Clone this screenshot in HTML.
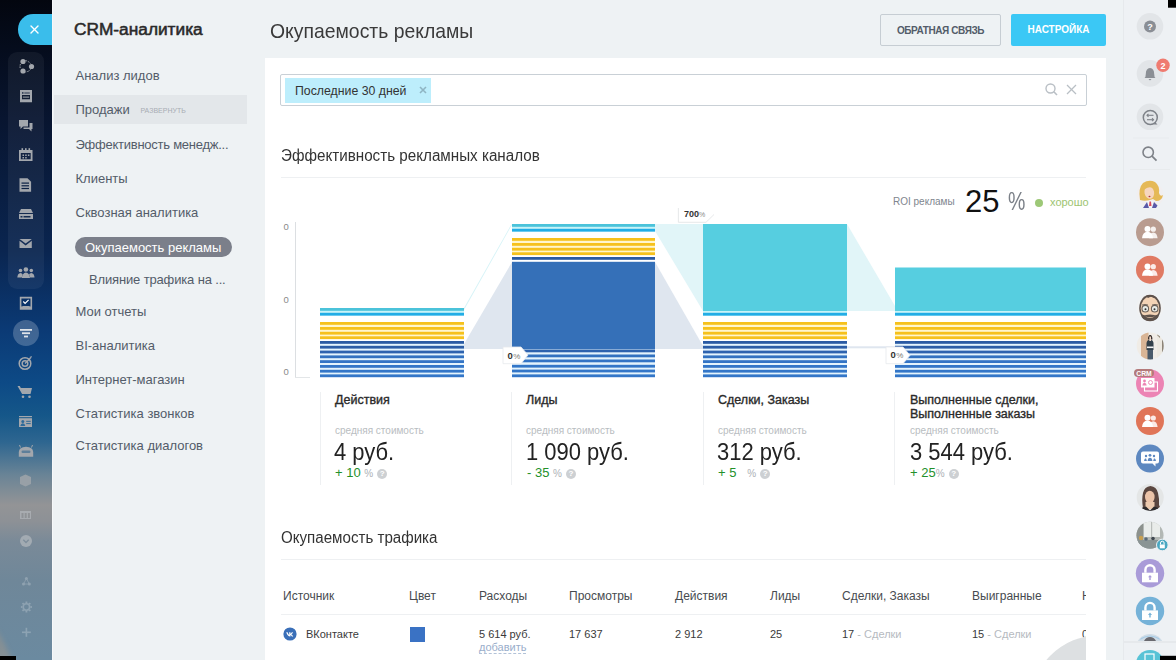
<!DOCTYPE html>
<html><head><meta charset="utf-8">
<style>
*{margin:0;padding:0;box-sizing:border-box}
html,body{width:1176px;height:660px;overflow:hidden}
body{background:#eef2f4;font-family:"Liberation Sans",sans-serif;position:relative;color:#333}
.abs{position:absolute}
#lsb{left:0;top:0;width:52px;height:660px;background:linear-gradient(180deg,#03060f 0%,#081530 18%,#0a2550 38%,#0b3a75 50%,#0d4a86 58%,#155789 63%,#2e6690 67%,#6a8496 72%,#939496 76.5%,#8d9196 79%,#7a8a98 82%,#6f8799 88%,#6b8aa0 100%)}
#lsb .grp{left:8px;top:52px;width:36px;height:237px;border-radius:9px;background:rgba(255,255,255,0.05)}
#lsb .pill{left:18px;top:14px;width:34px;height:30.5px;border-radius:15.25px 0 0 15.25px;background:#3abdeb}
#lsb .act{left:13px;top:320px;width:26px;height:26px;border-radius:50%;background:rgba(255,255,255,0.22)}
#menu{left:52px;top:0;width:213px;height:660px;background:#eef2f4;border-left:1px solid #f6f8f9}
.mi{position:absolute;left:75.5px;font-size:13px;color:#535c69;white-space:nowrap}
.main-title{left:270px;top:18.5px;font-size:21px;color:#3a3a3a;transform:scaleX(0.923);transform-origin:0 0;white-space:nowrap}
.btn{position:absolute;top:14px;height:32px;font-size:10px;font-weight:bold;text-align:center;line-height:32px;border-radius:2px}
#card{left:265px;top:58px;width:841px;height:602px;background:#fff}
#rsb{left:1123px;top:0;width:53px;height:660px;background:#eef1f4;border-left:1px solid #e6e9ec}
.vl{top:392px;width:1px;height:93px;background:#eef0f2}
.st b{font-weight:normal;-webkit-text-stroke:0.35px #2a2a2a}
.st{position:absolute;top:394px;font-size:12.5px;color:#2a2a2a;line-height:13.6px;white-space:nowrap}
.sub{position:absolute;top:425px;font-size:10px;color:#b9bdc1;white-space:nowrap}
.big{position:absolute;top:438.5px;font-size:23px;transform:scaleX(0.955);transform-origin:0 0;color:#222;white-space:nowrap}
.pct{position:absolute;top:465px;font-size:13px;color:#23902a;white-space:nowrap}
.pct i{font-style:normal;font-size:10px;color:#adb1b5;margin-left:0px}
.pct q{display:inline-block;width:10px;height:10px;border-radius:50%;background:#cdd0d3;color:#fff;font-size:8px;font-weight:bold;text-align:center;line-height:10px;margin-left:4px;vertical-align:1px}
.pct q:before,.pct q:after{content:""}
.th{position:absolute;top:588.5px;font-size:12px;color:#474b50;white-space:nowrap}
.td{position:absolute;top:628px;font-size:11px;color:#3a3a3a;white-space:nowrap}
</style></head><body>
<div id="lsb" class="abs">
  <div class="abs pill"></div>
  <div class="abs grp"></div>
  <div class="abs act"></div>
<svg class="abs" style="left:0;top:0" width="52" height="660">
<g fill="none" stroke="#fff" stroke-width="1.4" stroke-linecap="round"><line x1="31" y1="26" x2="38" y2="33"/><line x1="38" y1="26" x2="31" y2="33"/></g>
<g fill="#a3a7ad">
<!-- feed -->
<circle cx="23" cy="61.5" r="2.6"/><circle cx="31.5" cy="66.5" r="2.6"/><circle cx="23" cy="71" r="2.6"/>
<path d="M25.5 60.5 Q29 61.5 30.5 63.5" stroke="#a3a7ad" stroke-width="1" fill="none" stroke-dasharray="1.5 1"/>
<path d="M30.5 69.5 Q29 71.5 25.5 72" stroke="#a3a7ad" stroke-width="1" fill="none" stroke-dasharray="1.5 1"/>
<path d="M20.5 64 Q19.5 66.5 20.5 69" stroke="#a3a7ad" stroke-width="1" fill="none" stroke-dasharray="1.5 1"/>
<!-- window -->
<path d="M20 90 h12 v12.3 h-12z M22 95 v4.2 h8 v-4.2z" fill-rule="evenodd"/>
<rect x="22" y="92.3" width="1.5" height="1.3" fill="#0a1a35"/><rect x="24.3" y="92.6" width="5.5" height="0.8" fill="#0a1a35"/>
<rect x="22.8" y="96.6" width="6.4" height="1" fill="#a3a7ad"/>
<!-- chat -->
<path d="M19 120 h9 v6.5 h-5 l-2.5 2.5 v-2.5 h-1.5z"/>
<path d="M29.5 123 h3 v6 h-1 v2.5 l-2.5-2.5 h-5.5 v-1.5 h6z"/>
<!-- calendar -->
<path d="M19 150 h13.5 v11 h-13.5z M20.8 153 v6.3 h9.9 v-6.3z" fill-rule="evenodd"/>
<rect x="21.5" y="148.2" width="1.6" height="2.5"/><rect x="25" y="148.2" width="1.6" height="2.5"/><rect x="28.5" y="148.2" width="1.6" height="2.5"/>
<rect x="22.5" y="154.5" width="1.5" height="1.5"/><rect x="25.2" y="154.5" width="1.5" height="1.5"/><rect x="27.9" y="154.5" width="1.5" height="1.5"/><rect x="22.5" y="157" width="1.5" height="1.5"/><rect x="25.2" y="157" width="1.5" height="1.5"/>
<!-- document -->
<path d="M19.5 178.2 h8 l3.6 3.6 v10 h-11.6z"/>
<rect x="21.5" y="182.5" width="7.5" height="1.2" fill="#0b2044"/><rect x="21.5" y="185.2" width="7.5" height="1.2" fill="#0b2044"/><rect x="21.5" y="187.9" width="7.5" height="1.2" fill="#0b2044"/>
<!-- drive -->
<path d="M21 209 h10 l2 4 h-14z"/>
<path d="M19 214 h14 v5 h-14z M20.5 216 v1.5 h2 v-1.5z M23.5 216 v1.5 h7 v-1.5z" fill-rule="evenodd"/>
<!-- mail -->
<path d="M19.5 239 h12.3 l-6.15 4.6z"/>
<path d="M19.5 240.8 l6.15 4.6 l6.15-4.6 v7.3 h-12.3z"/>
<!-- people -->
<circle cx="25.9" cy="269.5" r="2.3"/><path d="M21.8 278 q0.5-5 4.1-5.5 q3.6 0.5 4.1 5.5z"/>
<circle cx="20.5" cy="270.5" r="1.8"/><path d="M17.3 277.5 q0.3-4 3.2-4.4 q1.5 0.2 2.2 1.2 l-1 3.2z"/>
<circle cx="31.3" cy="270.5" r="1.8"/><path d="M34.5 277.5 q-0.3-4 -3.2-4.4 q-1.5 0.2 -2.2 1.2 l1 3.2z"/>
<!-- task -->
<path d="M19.8 296.8 h12.3 v13 h-12.3z M21.4 298.4 v8 h9.1 v-8z" fill-rule="evenodd"/>
<rect x="22.5" y="306" width="7" height="2" />
<path d="M23.3 301.5 l1.8 1.8 l3.5-3.5" stroke="#fff" stroke-width="1.2" fill="none"/>
</g>
<!-- funnel -->
<g fill="#dfe3e8"><rect x="20" y="329" width="12" height="1.8"/><rect x="22" y="332.3" width="8" height="1.8"/><rect x="24" y="335.6" width="4" height="1.8"/></g>
<g fill="none" stroke="#a3a7ad" stroke-width="1.5">
<circle cx="25" cy="363.5" r="5.8"/><circle cx="25" cy="363.5" r="2.8"/><line x1="25" y1="363.5" x2="30.5" y2="358"/>
</g>
<path d="M29.5 357 l2.5-1 l-1 2.5z" fill="#a3a7ad"/>
<g fill="#a3a7ad">
<!-- cart -->
<path d="M17.5 386 h2.3 l1 2 h11.2 l-1.5 6 h-8.4z" />
<circle cx="23" cy="396.8" r="1.3"/><circle cx="29.5" cy="396.8" r="1.3"/>
<!-- id card -->
<rect x="19" y="416" width="13" height="1.2"/>
<path d="M19 418.2 h13 v8.8 h-13z" />
<circle cx="22.8" cy="421.5" r="1.5" fill="#2d6a9a"/><path d="M20.3 426 q0.5-2.6 2.5-2.8 q2 0.2 2.5 2.8z" fill="#2d6a9a"/>
<rect x="26.2" y="420.8" width="4.5" height="1.1" fill="#3a7099"/><rect x="26.2" y="423" width="4.5" height="1.1" fill="#3a7099"/>
<!-- robot -->
<path d="M18.8 452 q0.3-5 7.2-5.2 q6.9 0.2 7.2 5.2 v4.8 h-14.4z"/>
<rect x="21.5" y="450.5" width="9" height="2.5" rx="1.2" fill="#5e7f9a"/>
<line x1="20.5" y1="447.5" x2="19.5" y2="445" stroke="#a3a7ad" stroke-width="1"/><line x1="31.5" y1="447.5" x2="32.5" y2="445" stroke="#a3a7ad" stroke-width="1"/>
</g>
<g fill="#9ca3a9" opacity="0.9">
<!-- box -->
<path d="M20 477 l5.5-2.5 l5.5 2.5 v7 l-5.5 2.5 l-5.5-2.5z"/>
</g>
<g fill="#b2b6ba" opacity="0.7">
<!-- sites -->
<path d="M20 511 h11 v8 h-11z M21.5 513 v5 h2 v-5z M24.7 513 v5 h2 v-5z M27.9 513 v5 h2 v-5z" fill-rule="evenodd"/>
</g>
<circle cx="26" cy="541" r="6" fill="#a9b0b6" opacity="0.85"/>
<path d="M23.3 539.8 l2.7 2.7 l2.7-2.7" stroke="#7f8e9b" stroke-width="1.3" fill="none"/>
<g fill="#fff" opacity="0.22">
<circle cx="26.4" cy="578.5" r="1.5"/><circle cx="23.5" cy="584" r="1.5"/><circle cx="29.3" cy="584" r="1.5"/>
<path d="M26.4 578.5 L23.5 584 L29.3 584z" fill="none" stroke="#fff" stroke-width="0.8"/>
<g fill="none" stroke="#fff" stroke-width="1.6"><circle cx="26.4" cy="607" r="3.2"/></g><g stroke="#fff" stroke-width="1.8"><line x1="26.4" y1="601.5" x2="26.4" y2="603"/><line x1="26.4" y1="611" x2="26.4" y2="612.5"/><line x1="20.9" y1="607" x2="22.4" y2="607"/><line x1="30.4" y1="607" x2="31.9" y2="607"/><line x1="22.5" y1="603.1" x2="23.6" y2="604.2"/><line x1="29.2" y1="609.8" x2="30.3" y2="610.9"/><line x1="22.5" y1="610.9" x2="23.6" y2="609.8"/><line x1="29.2" y1="604.2" x2="30.3" y2="603.1"/></g>
<rect x="25.6" y="627.8" width="1.6" height="9"/><rect x="22" y="631.5" width="8.8" height="1.6"/>
</g>
<defs><filter id="bl1"><feGaussianBlur stdDeviation="2.5"/></filter></defs><path d="M-4 628 Q6 646 14 664 H-4z" fill="#a0968a" opacity="0.5" filter="url(#bl1)"/>
<rect x="0" y="656" width="16" height="4" fill="#000"/>
</svg>
</div>
<div id="menu" class="abs"></div>
<div class="abs" style="left:74px;top:19px;font-size:17.3px;color:#2a2a2a;-webkit-text-stroke:0.55px #2a2a2a">CRM-аналитика</div>
<div class="mi" style="top:68px">Анализ лидов</div>
<div class="abs" style="left:54px;top:95px;width:193px;height:29px;background:#e3e7ea"></div>
<div class="mi" style="top:102px">Продажи <span style="font-size:7px;color:#a8adb4;margin-left:7px;vertical-align:1px">РАЗВЕРНУТЬ</span></div>
<div class="mi" style="top:137px;letter-spacing:-0.25px">Эффективность менедж...</div>
<div class="mi" style="top:171px">Клиенты</div>
<div class="mi" style="top:205px">Сквозная аналитика</div>
<div class="abs" style="left:75px;top:237px;width:157px;height:20px;border-radius:10px;background:#7b7f8a"></div>
<div class="mi" style="top:240px;left:85px;color:#fff">Окупаемость рекламы</div>
<div class="mi" style="top:272px;left:89px;letter-spacing:-0.15px">Влияние трафика на ...</div>
<div class="mi" style="top:304px">Мои отчеты</div>
<div class="mi" style="top:338px">BI-аналитика</div>
<div class="mi" style="top:372px">Интернет-магазин</div>
<div class="mi" style="top:406px">Статистика звонков</div>
<div class="mi" style="top:438px">Статистика диалогов</div>

<div class="abs main-title">Окупаемость рекламы</div>
<div class="btn" style="left:880px;width:121px;border:1px solid #c6cdd3;color:#535c69;background:#eef2f4;letter-spacing:-0.4px">ОБРАТНАЯ СВЯЗЬ</div>
<div class="btn" style="left:1011px;width:95px;background:#3bc8f5;color:#fff">НАСТРОЙКА</div>

<div id="card" class="abs"></div>
<!-- filter -->
<div class="abs" style="left:280px;top:74px;width:807px;height:32px;border:1px solid #c9d0d6;border-radius:2px;background:#fff"></div>
<div class="abs" style="left:285px;top:78px;width:146px;height:25px;background:#bdeefc"></div>
<div class="abs" style="left:295px;top:84px;font-size:12.3px;color:#333;white-space:nowrap">Последние 30 дней</div>
<svg class="abs" style="left:419px;top:86px" width="8" height="8"><path d="M1 1 L7 7 M7 1 L1 7" stroke="#8fb5c3" stroke-width="1.6"/></svg>
<svg class="abs" style="left:1044px;top:82px" width="40" height="16" viewBox="0 0 40 16"><circle cx="6.5" cy="6.5" r="4.5" fill="none" stroke="#b9bfc5" stroke-width="1.4"/><line x1="9.8" y1="9.8" x2="13" y2="13" stroke="#b9bfc5" stroke-width="1.6"/><line x1="23" y1="3" x2="32" y2="12" stroke="#b9bfc5" stroke-width="1.3"/><line x1="32" y1="3" x2="23" y2="12" stroke="#b9bfc5" stroke-width="1.3"/></svg>
<!-- section title -->
<div class="abs" style="left:281px;top:147px;font-size:16px;color:#333;white-space:nowrap;transform:scaleX(0.95);transform-origin:0 0">Эффективность рекламных каналов</div>
<div class="abs" style="left:281px;top:177px;width:805px;height:1px;background:#eef0f2"></div>
<!-- ROI -->
<div class="abs" style="left:893px;top:196px;font-size:10px;color:#80868e;white-space:nowrap">ROI рекламы</div>
<div class="abs" style="left:965px;top:183.5px;font-size:31px;color:#111;white-space:nowrap">25</div>
<div class="abs" style="left:1008px;top:187px;font-size:25px;color:#7b8088;white-space:nowrap;transform:scaleX(0.78);transform-origin:0 0">%</div>
<div class="abs" style="left:1035px;top:198.5px;width:8px;height:8px;border-radius:50%;background:#9dc877"></div>
<div class="abs" style="left:1050px;top:196px;font-size:11px;color:#9dc471;white-space:nowrap">хорошо</div>
<!-- axis -->
<div class="abs" style="left:283.5px;top:220.5px;font-size:9.5px;color:#8a8a8a">0</div>
<div class="abs" style="left:283.5px;top:293.5px;font-size:9.5px;color:#8a8a8a">0</div>
<div class="abs" style="left:283.5px;top:365.5px;font-size:9.5px;color:#8a8a8a">0</div>
<div class="abs" style="left:295px;top:222px;width:1px;height:155px;background:#dcdfe2"></div>
<div class="abs" style="left:295px;top:377px;width:15px;height:1px;background:#e3e6e8"></div>
<svg class="abs" style="left:0;top:0" width="1176" height="660">
<polygon points="464,308 511.5,224 511.5,225.5 464,310" fill="#d6f3f7"/>
<polygon points="464,344 512,262 512,349 464,349" fill="#dfe6ef"/>
<polygon points="655,224 703,224 703,311 655,231" fill="#e1f5f8"/>
<polygon points="655,262 703,346 703,349 655,349" fill="#dfe6ef"/>
<polygon points="847,224 895,306 895,311 847,311" fill="#e1f5f8"/>
<rect x="847" y="346.3" width="48" height="2" fill="#dfe6ef"/>
<rect x="320" y="308" width="144" height="7.6" fill="#c8f3f8"/>
<rect x="320" y="308" width="144" height="2.8" fill="#4bc3da"/>
<rect x="320" y="312.8" width="144" height="2.8" fill="#22ade6"/>
<rect x="320" y="322" width="144" height="17.1" fill="#fff6cc"/>
<rect x="320" y="322" width="144" height="2.8" fill="#f6c11c"/>
<rect x="320" y="327" width="144" height="2.8" fill="#f6c11c"/>
<rect x="320" y="331.8" width="144" height="2.8" fill="#f6c11c"/>
<rect x="320" y="336.3" width="144" height="2.8" fill="#f6c11c"/>
<rect x="320" y="341" width="144" height="36.2" fill="#e4f4fd"/>
<rect x="320" y="341" width="144" height="2.8" fill="#2a5aa3"/>
<rect x="320" y="345.8" width="144" height="2.8" fill="#2b5ca6"/>
<rect x="320" y="350.6" width="144" height="2.8" fill="#2d62ae"/>
<rect x="320" y="355.4" width="144" height="2.8" fill="#3271c0"/>
<rect x="320" y="360.2" width="144" height="2.8" fill="#3374c5"/>
<rect x="320" y="365" width="144" height="2.8" fill="#3376c8"/>
<rect x="320" y="369.8" width="144" height="2.8" fill="#3376c8"/>
<rect x="320" y="374.4" width="144" height="2.8" fill="#3376c8"/>
<rect x="512" y="224" width="143" height="7.6" fill="#c8f3f8"/>
<rect x="512" y="224" width="143" height="2.8" fill="#4bc3da"/>
<rect x="512" y="228.8" width="143" height="2.8" fill="#22ade6"/>
<rect x="512" y="238" width="143" height="17.1" fill="#fff6cc"/>
<rect x="512" y="238" width="143" height="2.8" fill="#f6c11c"/>
<rect x="512" y="243" width="143" height="2.8" fill="#f6c11c"/>
<rect x="512" y="247.8" width="143" height="2.8" fill="#f6c11c"/>
<rect x="512" y="252.3" width="143" height="2.8" fill="#f6c11c"/>
<rect x="512" y="257" width="143" height="2.8" fill="#2a5aa3"/>
<rect x="512" y="261.8" width="143" height="87.2" fill="#3570b8"/>
<rect x="512" y="349" width="143" height="28.2" fill="#e4f4fd"/>
<rect x="512" y="349.5" width="143" height="2.8" fill="#2d62ae"/>
<rect x="512" y="354.5" width="143" height="2.8" fill="#3271c0"/>
<rect x="512" y="359.5" width="143" height="2.8" fill="#3374c5"/>
<rect x="512" y="364.8" width="143" height="2.8" fill="#3376c8"/>
<rect x="512" y="369.6" width="143" height="2.8" fill="#3376c8"/>
<rect x="512" y="374.4" width="143" height="2.8" fill="#3376c8"/>
<rect x="703" y="224" width="144" height="87" fill="#56cee0"/>
<rect x="703" y="311" width="144" height="5" fill="#c8f3f8"/>
<rect x="703" y="312.8" width="144" height="2.8" fill="#22ade6"/>
<rect x="703" y="322" width="144" height="17.1" fill="#fff6cc"/>
<rect x="703" y="322" width="144" height="2.8" fill="#f6c11c"/>
<rect x="703" y="327" width="144" height="2.8" fill="#f6c11c"/>
<rect x="703" y="331.8" width="144" height="2.8" fill="#f6c11c"/>
<rect x="703" y="336.3" width="144" height="2.8" fill="#f6c11c"/>
<rect x="703" y="341" width="144" height="36.2" fill="#e4f4fd"/>
<rect x="703" y="341" width="144" height="2.8" fill="#2a5aa3"/>
<rect x="703" y="345.8" width="144" height="2.8" fill="#2b5ca6"/>
<rect x="703" y="350.6" width="144" height="2.8" fill="#2d62ae"/>
<rect x="703" y="355.4" width="144" height="2.8" fill="#3271c0"/>
<rect x="703" y="360.2" width="144" height="2.8" fill="#3374c5"/>
<rect x="703" y="365" width="144" height="2.8" fill="#3376c8"/>
<rect x="703" y="369.8" width="144" height="2.8" fill="#3376c8"/>
<rect x="703" y="374.4" width="144" height="2.8" fill="#3376c8"/>
<rect x="895" y="267.5" width="191" height="43.5" fill="#56cee0"/>
<rect x="895" y="311" width="191" height="5" fill="#c8f3f8"/>
<rect x="895" y="312.8" width="191" height="2.8" fill="#22ade6"/>
<rect x="895" y="322" width="191" height="17.1" fill="#fff6cc"/>
<rect x="895" y="322" width="191" height="2.8" fill="#f6c11c"/>
<rect x="895" y="327" width="191" height="2.8" fill="#f6c11c"/>
<rect x="895" y="331.8" width="191" height="2.8" fill="#f6c11c"/>
<rect x="895" y="336.3" width="191" height="2.8" fill="#f6c11c"/>
<rect x="895" y="341" width="191" height="36.2" fill="#e4f4fd"/>
<rect x="895" y="341" width="191" height="2.8" fill="#2a5aa3"/>
<rect x="895" y="345.8" width="191" height="2.8" fill="#2b5ca6"/>
<rect x="895" y="350.6" width="191" height="2.8" fill="#2d62ae"/>
<rect x="895" y="355.4" width="191" height="2.8" fill="#3271c0"/>
<rect x="895" y="360.2" width="191" height="2.8" fill="#3374c5"/>
<rect x="895" y="365" width="191" height="2.8" fill="#3376c8"/>
<rect x="895" y="369.8" width="191" height="2.8" fill="#3376c8"/>
<rect x="895" y="374.4" width="191" height="2.8" fill="#3376c8"/>
</svg>
<!-- tags -->
<svg class="abs" style="left:500px;top:345px" width="30" height="21" viewBox="0 0 30 21"><path d="M3 2 H21 L28 10 L21 18.7 H3 Z" fill="#fff" stroke="#e6e9ec" stroke-width="0.8"/></svg>
<div class="abs" style="left:507.5px;top:349.5px;font-size:9.5px;color:#333;font-weight:bold;white-space:nowrap">0<span style="font-size:8px;color:#777;font-weight:normal;margin-left:0.5px">%</span></div>
<svg class="abs" style="left:882.5px;top:345px" width="30" height="21" viewBox="0 0 30 21"><path d="M3 2 H20 L27 10.3 L20 18.7 H3 Z" fill="#fff" stroke="#e6e9ec" stroke-width="0.8"/></svg>
<div class="abs" style="left:890.5px;top:349px;font-size:9.5px;color:#333;font-weight:bold;white-space:nowrap">0<span style="font-size:8px;color:#777;font-weight:normal;margin-left:0.5px">%</span></div>
<svg class="abs" style="left:676px;top:205px" width="40" height="20" viewBox="0 0 40 20"><path d="M2.4 3 H38 V9.5 L30 17.3 H2.4 Z" fill="#fff"/><path d="M2.4 3 V17.3 H30 L38 9.5" fill="none" stroke="#dfe2e5" stroke-width="0.8"/></svg>
<div class="abs" style="left:684px;top:209px;font-size:9px;color:#333;font-weight:bold;white-space:nowrap">700<span style="font-size:7px;color:#888;font-weight:normal">%</span></div>
<!-- stats -->
<div class="abs vl" style="left:320px"></div>
<div class="abs vl" style="left:511px"></div>
<div class="abs vl" style="left:703px"></div>
<div class="abs vl" style="left:894px"></div>
<div class="st" style="left:335px"><b>Действия</b></div>
<div class="st" style="left:526px"><b>Лиды</b></div>
<div class="st" style="left:718px"><b>Сделки, Заказы</b></div>
<div class="st" style="left:910px"><b>Выполненные сделки,<br>Выполненные заказы</b></div>
<div class="sub" style="left:335px">средняя стоимость</div>
<div class="sub" style="left:526px">средняя стоимость</div>
<div class="sub" style="left:718px">средняя стоимость</div>
<div class="sub" style="left:910px">средняя стоимость</div>
<div class="big" style="left:334px">4 руб.</div>
<div class="big" style="left:526px">1 090 руб.</div>
<div class="big" style="left:717px">312 руб.</div>
<div class="big" style="left:910px">3 544 руб.</div>
<div class="pct" style="left:335px">+ 10 <i>%</i><q>?</q></div>
<div class="pct" style="left:527px">- 35 <i>%</i><q>?</q></div>
<div class="pct" style="left:718px">+ 5 &nbsp;&nbsp;<i>%</i><q>?</q></div>
<div class="pct" style="left:910px">+ 25<i>%</i><q>?</q></div>
<!-- table -->
<div class="abs" style="left:281px;top:529px;font-size:16px;color:#333;white-space:nowrap;transform:scaleX(0.945);transform-origin:0 0">Окупаемость трафика</div>
<div class="abs" style="left:281px;top:559px;width:805px;height:1px;background:#eef0f2"></div>
<div class="th" style="left:283px">Источник</div>
<div class="th" style="left:409px">Цвет</div>
<div class="th" style="left:479px">Расходы</div>
<div class="th" style="left:569px">Просмотры</div>
<div class="th" style="left:675px">Действия</div>
<div class="th" style="left:770px">Лиды</div>
<div class="th" style="left:842px">Сделки, Заказы</div>
<div class="th" style="left:972px">Выигранные</div>
<div class="th" style="left:1082px;width:4px;overflow:hidden">Н</div>
<div class="abs" style="left:281px;top:614px;width:805px;height:1px;background:#eef0f2"></div>
<svg class="abs" style="left:283px;top:626.5px" width="14" height="14" viewBox="0 0 14 14"><circle cx="7" cy="7" r="6.6" fill="#3a6fb8"/><path d="M3.3 5.3 h1.3 q0.7 2 1.6 2.6 v-2.6 h1.2 v1.5 q0.9-0.3 1.4-1.5 h1.2 q-0.4 1.4-1.6 2.1 q1.2 0.6 1.8 2.1 h-1.3 q-0.6-1.2-1.5-1.4 v1.4 h-0.2 q-2.6 0-3.9-4.1z" fill="#fff"/></svg>
<div class="td" style="left:306px">ВКонтакте</div>
<div class="abs" style="left:410px;top:627px;width:15px;height:15px;background:#3a72c4"></div>
<div class="td" style="left:479px">5 614 руб.</div>
<div class="abs" style="left:479px;top:641.5px;font-size:11px;color:#9aaecb;border-bottom:1px dashed #b3c3d8;line-height:11px;padding-bottom:0.5px;white-space:nowrap">добавить</div>
<div class="td" style="left:569px">17 637</div>
<div class="td" style="left:675px">2 912</div>
<div class="td" style="left:770px">25</div>
<div class="td" style="left:842px">17 <span style="color:#b6babf">- Сделки</span></div>
<div class="td" style="left:972px">15 <span style="color:#b6babf">- Сделки</span></div>
<div class="td" style="left:1082px;width:4px;overflow:hidden">0</div>
<div class="abs" style="left:1030px;top:635px;width:56px;height:25px;overflow:hidden"><div style="position:absolute;left:0;top:0;width:140px;height:140px;border-radius:50%;background:#dde0e2"></div></div>


<div id="rsb" class="abs"></div>
<svg class="abs" style="left:1124px;top:0" width="52" height="660" viewBox="1124 0 52 660">
<rect x="1168" y="0" width="8" height="7.7" fill="#000"/>
<circle cx="1150" cy="26.3" r="13.3" fill="#e2e5e8"/>
<circle cx="1150" cy="26.5" r="6" fill="#8a8e95"/>
<text x="1150" y="29.8" font-size="9" font-weight="bold" fill="#fff" text-anchor="middle" font-family="Liberation Sans">?</text>
<circle cx="1150" cy="73.4" r="13.3" fill="#e2e5e8"/>
<path d="M1144.5 78 q1.3-1 1.3-4 q0-5.5 4.2-6 q4.2 0.5 4.2 6 q0 3 1.3 4z" fill="#8b8f95"/>
<path d="M1148.5 79 h3 l-1.5 1.5z" fill="#8b8f95"/>
<circle cx="1163" cy="65.2" r="6.7" fill="#ef7b70"/>
<text x="1163" y="68.5" font-size="9" font-weight="bold" fill="#fff" text-anchor="middle" font-family="Liberation Sans">2</text>
<circle cx="1150" cy="116.8" r="13.3" fill="#e2e5e8"/>
<circle cx="1150.3" cy="117.5" r="7" fill="none" stroke="#7e8288" stroke-width="1.5"/>
<path d="M1155 122 l2.5 2.5 l-3.5 0z" fill="#7e8288"/>
<g stroke="#7e8288" stroke-width="1.1" fill="none"><line x1="1147" y1="115.3" x2="1153.5" y2="115.3"/><line x1="1147" y1="119.7" x2="1153.5" y2="119.7"/><path d="M1148.5 113.8 l-1.5 1.5 l1.5 1.5"/><path d="M1152 118.2 l1.5 1.5 l-1.5 1.5"/></g>
<rect x="1133" y="137.5" width="36" height="1" fill="#e8ebed"/>
<circle cx="1148.2" cy="152.3" r="5.2" fill="none" stroke="#7e8288" stroke-width="1.6"/>
<line x1="1152" y1="156.2" x2="1156.5" y2="160.7" stroke="#7e8288" stroke-width="1.8"/>
<rect x="1130" y="169" width="40" height="1" fill="#e8ebed"/>
<!-- avatar cartoon -->
<circle cx="1150" cy="195" r="13.5" fill="#f1eff0"/>
<path d="M1140 200 Q1138 188 1143 183 Q1149 179 1155 182 Q1160 186 1159 193 Q1160 197 1163 195 Q1162 201 1156 201 L1153 199 Q1146 202 1140 200z" fill="#e5b957"/>
<ellipse cx="1149.3" cy="192.5" rx="4.8" ry="6.3" transform="rotate(-12 1149.3 192.5)" fill="#f6d6bf"/>
<path d="M1145 186 Q1148 183 1153 185 L1153 188 Q1149 186 1145 189z" fill="#e5b957"/>
<ellipse cx="1149.5" cy="196.5" rx="1" ry="0.8" fill="#b0303a"/>
<path d="M1143 208 L1147 201 L1153 201 L1157 205 L1156 208z" fill="#f4f4f6"/>
<path d="M1143 208 L1147 202 L1149 208z M1152 208 L1154 202 L1157.5 205.5 L1156 208z" fill="#5a5aa8"/>
<path d="M1149.5 201.5 L1151 201.5 L1151.5 206 L1149 206z" fill="#d84a5a"/>
<circle cx="1150" cy="232.2" r="14" fill="#b99c90"/>
<g fill="#fff"><circle cx="1153.3" cy="229.2" r="2.6" opacity="0.85"/><path d="M1149 238.2 q0.5-5.5 4.3-5.8 q3.8 0.3 4.3 5.8z" opacity="0.85"/>
<circle cx="1147.5" cy="228.89999999999998" r="3"/><path d="M1142 238.2 q0.6-6.2 5.5-6.5 q4.9 0.3 5.5 6.5z"/></g>
<circle cx="1150" cy="269.7" r="14" fill="#e07a63"/>
<g fill="#fff"><circle cx="1153.3" cy="266.7" r="2.6" opacity="0.85"/><path d="M1149 275.7 q0.5-5.5 4.3-5.8 q3.8 0.3 4.3 5.8z" opacity="0.85"/>
<circle cx="1147.5" cy="266.4" r="3"/><path d="M1142 275.7 q0.6-6.2 5.5-6.5 q4.9 0.3 5.5 6.5z"/></g>
<!-- man -->
<circle cx="1150" cy="307.5" r="13.5" fill="#f1f2f3"/>
<ellipse cx="1150" cy="308" rx="10.8" ry="13.2" fill="#5e524c"/>
<ellipse cx="1150" cy="308.5" rx="9.3" ry="11.8" fill="#f3d3b6"/>
<path d="M1142 300 Q1143 296 1146 296 L1148 298 L1151 296.5 L1154 298 Q1157 297 1158 300 Q1156 295 1150 295 Q1144 295 1142 300z" fill="#5e524c"/>
<path d="M1141 313 Q1143 316 1146 315 Q1150 314 1154 315 Q1157 316 1159 313 Q1159 321 1150 321 Q1141 321 1141 313z" fill="#5e524c"/>
<path d="M1145 316.5 Q1150 319 1155 316.5 Q1150 317.5 1145 316.5z" fill="#f3d3b6"/>
<g fill="#e9ece8" stroke="#6d625a" stroke-width="1.1"><circle cx="1145.3" cy="308.7" r="3.3"/><circle cx="1154.7" cy="308.7" r="3.3"/></g>
<circle cx="1145.5" cy="309.2" r="1" fill="#333"/><circle cx="1154.5" cy="309.2" r="1" fill="#333"/>
<path d="M1142 305 Q1145 303.8 1148 305 M1152 305 Q1155 303.8 1158 305" stroke="#6d625a" stroke-width="0.9" fill="none"/>
<!-- photo woman -->
<clipPath id="cpw1"><circle cx="1150.2" cy="345.9" r="13.5"/></clipPath>
<g clip-path="url(#cpw1)">
<rect x="1136" y="332" width="29" height="29" fill="#f0ece6"/>
<rect x="1141" y="332" width="7.5" height="29" fill="#d9b596"/>
<rect x="1157" y="332" width="5" height="29" fill="#ece8e0"/>
<path d="M1157 335 l3 3 v-6z" fill="#8a8070"/>
<rect x="1162" y="332" width="3" height="29" fill="#8c8478"/>
<path d="M1146.5 350 v-6.5 q0-3.5 3.5-4 q3.5 0.5 3.5 4 v6.5z" fill="#33404a"/>
<rect x="1147.5" y="350" width="5.5" height="11" fill="#4a5a6a"/>
<rect x="1147" y="346.5" width="6.5" height="1.6" fill="#f3f3f3"/>
<path d="M1148 339.5 q0-4.5 2.2-4.5 q2.2 0 2.2 4.5z" fill="#2a2220"/>
<rect x="1149.3" y="336.5" width="1.8" height="4.5" fill="#f0d8c8"/>
</g>
<!-- crm pink -->
<circle cx="1150" cy="383.6" r="14" fill="#ec84b4"/>
<rect x="1144.5" y="382" width="13" height="9" fill="none" stroke="#fff" stroke-width="1.1"/>
<rect x="1141" y="378" width="13.5" height="9.5" fill="#fff"/>
<circle cx="1144.5" cy="381" r="1.4" fill="#ec84b4"/><path d="M1142.3 385.5 q0.3-2.6 2.2-2.7 q1.9 0.1 2.2 2.7z" fill="#ec84b4"/>
<circle cx="1150.5" cy="382.5" r="2" fill="none" stroke="#ec84b4" stroke-width="0.9"/>
<rect x="1134" y="369" width="20" height="8" rx="4" fill="#b47a7b"/>
<text x="1144" y="375.5" font-size="6.8" font-weight="bold" fill="#fff" text-anchor="middle" font-family="Liberation Sans">CRM</text>
<circle cx="1150" cy="421" r="14" fill="#e07558"/>
<g fill="#fff"><circle cx="1153.3" cy="418" r="2.6" opacity="0.85"/><path d="M1149 427 q0.5-5.5 4.3-5.8 q3.8 0.3 4.3 5.8z" opacity="0.85"/>
<circle cx="1147.5" cy="417.7" r="3"/><path d="M1142 427 q0.6-6.2 5.5-6.5 q4.9 0.3 5.5 6.5z"/></g>
<!-- blue chat -->
<circle cx="1150" cy="458.6" r="14" fill="#5d88c0"/>
<path d="M1143 451.5 h14 a2 2 0 0 1 2 2 v8 a2 2 0 0 1 -2 2 h-1.5 v3 l-3-3 h-9.5 a2 2 0 0 1 -2-2 v-8 a2 2 0 0 1 2-2z" fill="#fff"/>
<g fill="#5d88c0"><circle cx="1150" cy="455.3" r="1.4"/><path d="M1147.6 461 q0.3-3.2 2.4-3.3 q2.1 0.1 2.4 3.3z"/><circle cx="1146" cy="456" r="1.2"/><path d="M1144 461 q0.2-2.7 2-2.8 l0.9 2.8z"/><circle cx="1154" cy="456" r="1.2"/><path d="M1156 461 q-0.2-2.7 -2-2.8 l-0.9 2.8z"/></g>
<!-- woman photo 2 -->
<clipPath id="cpw2"><circle cx="1150.2" cy="497.4" r="13.5"/></clipPath>
<g clip-path="url(#cpw2)">
<rect x="1136" y="483" width="29" height="29" fill="#e4e6e6"/>
<path d="M1143 508 q-1.5-9 0-15 q1.5-6.5 7.5-7 q6 0.5 7.5 7 q1.5 6 1 12 l2 4z" fill="#5a4640"/>
<ellipse cx="1149.8" cy="497" rx="4.8" ry="6.2" fill="#ebc3a8"/>
<path d="M1144.5 491.5 q5-4 10 0 q-2-2.5-5-2.5 q-3 0-5 2.5z" fill="#5a4640"/>
<path d="M1145.5 502 h9 v7 h-9z" fill="#eccaaf"/>
<path d="M1139 512 q2-5 7-5.5 l4 4 l4-4 q5 0.5 7 5.5z" fill="#2c2a2c"/>
</g>
<!-- office photo -->
<clipPath id="cpof"><circle cx="1150" cy="535.3" r="13.5"/></clipPath>
<g clip-path="url(#cpof)">
<rect x="1136" y="521" width="28" height="29" fill="#b3b8b5"/>
<rect x="1136" y="521" width="7" height="29" fill="#8c918d"/>
<rect x="1144" y="521" width="16" height="16" fill="#e9ecea"/>
<rect x="1151" y="521" width="1.2" height="16" fill="#b9bdbb"/>
<rect x="1136" y="540" width="28" height="10" fill="#8a9494"/>
<circle cx="1141" cy="538" r="2.2" fill="#c9a050"/><circle cx="1146" cy="539" r="1.8" fill="#5a6a7a"/><circle cx="1153" cy="538.5" r="1.8" fill="#404850"/>
</g>
<circle cx="1162.3" cy="545" r="5.8" fill="#4aa8c2" stroke="#eef1f4" stroke-width="1"/>
<path d="M1160.5 544.5 v-1.5 a1.8 1.8 0 0 1 3.6 0 v1.5" fill="none" stroke="#fff" stroke-width="1"/>
<rect x="1159.8" y="544.5" width="5" height="3.8" fill="#fff"/>
<circle cx="1150" cy="573.3" r="14.2" fill="#a99bd8"/>
<path d="M1145.4 572.8 v-3 a4.6 4.6 0 0 1 9.2 0 v3" fill="none" stroke="#fff" stroke-width="2.4"/>
<rect x="1142" y="572.6999999999999" width="16" height="9.6" fill="#fff"/>
<path d="M1150 574.9 l-2 2.4 h1.3 v2.6 h1.4 v-2.6 h1.3z" fill="#a99bd8"/>
<circle cx="1150" cy="611" r="14.2" fill="#75b2d8"/>
<path d="M1145.4 610.5 v-3 a4.6 4.6 0 0 1 9.2 0 v3" fill="none" stroke="#fff" stroke-width="2.4"/>
<rect x="1142" y="610.4" width="16" height="9.6" fill="#fff"/>
<path d="M1150 612.6 l-2 2.4 h1.3 v2.6 h1.4 v-2.6 h1.3z" fill="#75b2d8"/>
<clipPath id="cp1"><rect x="1124" y="620" width="52" height="21"/></clipPath>
<g clip-path="url(#cp1)"><circle cx="1150" cy="648" r="14" fill="#d0dce6"/><path d="M1144 641 q2-4 6-4 q4 0 6 4z" fill="#6a6a70"/><path d="M1140 640 q10-7 20 0 l-1-2 q-9-5-18 0z" fill="#a8cce6"/></g>
<rect x="1124" y="641.5" width="52" height="1" fill="#dde1e4"/>
<circle cx="1150" cy="664" r="14" fill="#58c3d6"/><rect x="1145" y="654" width="9" height="7" fill="none" stroke="#fff" stroke-width="1.2"/>
<rect x="1160" y="655.8" width="16" height="5" fill="#000"/>
</svg>
</body></html>
